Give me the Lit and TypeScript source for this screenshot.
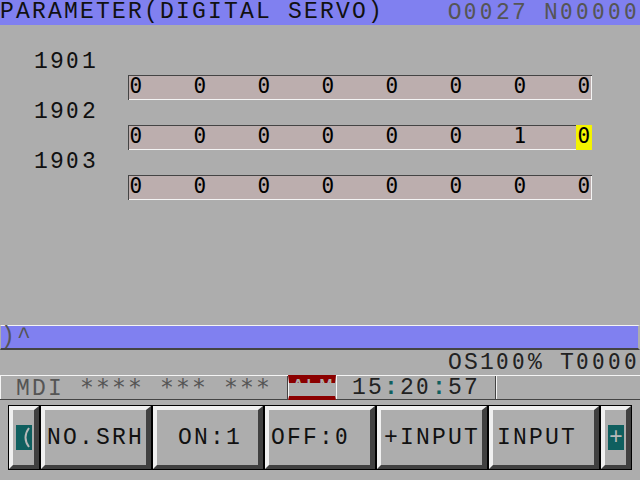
import { LitElement, html, css } from "lit";
import { customElement } from "lit/decorators.js";

const ROWS = [
  { no: "1901", bits: "00000000", cursor: -1 },
  { no: "1902", bits: "00000010", cursor: 7 },
  { no: "1903", bits: "00000000", cursor: -1 },
];

/** Sets every zero in the family whose zero carries a slash. */
const slashed = (s: string) =>
  [...s].map((c) => (c === "0" ? html`<span class="z">0</span>` : c));

const KEYS = [
  { label: html`NO. SRH`, cls: "srh" },
  { label: html`ON:1`, cls: "center" },
  { label: html`OFF:${slashed("0")}`, cls: "" },
  { label: html`+INPUT`, cls: "plus" },
  { label: html`INPUT`, cls: "inp" },
];

@customElement("app-root")
export class AppRoot extends LitElement {
  static styles = css`
    :host {
      display: flex;
      flex-direction: column;
      width: 640px;
      height: 480px;
      overflow: hidden;
      background: #adadad;
      font-family: "Liberation Mono", monospace;
      font-size: 23px;
      line-height: 24px;
      color: #111;
    }
    .t {
      letter-spacing: 2.2px;
      white-space: pre;
    }
    .z {
      font-family: "DejaVu Sans Mono", monospace;
      font-size: 21px;
      letter-spacing: 3.36px;
      font-weight: 400;
    }
    .title {
      display: flex;
      justify-content: space-between;
      height: 25px;
      flex: none;
      background: #8080f0;
    }
    .title .right {
      color: #555;
    }
    .params {
      flex: none;
      height: 300px;
      display: flex;
      flex-direction: column;
      padding-top: 25px;
      box-sizing: border-box;
    }
    .param {
      height: 50px;
      display: flex;
      flex-direction: column;
    }
    .no {
      height: 25px;
      line-height: 22px;
      padding-left: 34px;
    }
    .bar {
      display: flex;
      width: 464px;
      height: 25px;
      margin-left: 128px;
      justify-content: space-between;
      background: #bcaeae;
      box-shadow: inset 1px 1px 0 #444, inset -1px -1px 0 #f4f4f4;
    }
    .bit {
      width: 16px;
      height: 25px;
      line-height: 23px;
      padding-left: 1.5px;
      box-sizing: border-box;
      color: #000;
      font-family: "DejaVu Sans Mono", monospace;
      font-size: 21px;
      display: block;
    }
    .bit.on {
      background: #f4f400;
    }
    .cmd {
      flex: none;
      height: 25px;
      box-sizing: border-box;
      background: #8080f0;
      border-top: 1px solid #f4f4f4;
      border-bottom: 2px solid #444;
      border-left: 1px solid #adadad;
      border-right: 2px solid #adadad;
      color: #555;
      line-height: 22px;
    }
    .status {
      flex: none;
      height: 25px;
      text-align: right;
      color: #222;
    }
    .mode {
      flex: none;
      height: 25px;
      box-sizing: border-box;
      display: flex;
      border-top: 1px solid #f4f4f4;
      border-bottom: 1px solid #444;
    }
    .seg {
      box-sizing: border-box;
      height: 23px;
      line-height: 23px;
    }
    .s1 {
      width: 288px;
      padding-left: 15px;
      color: #555;
      border-right: 1px solid #444;
      border-left: 1px solid #f4f4f4;
    }
    .stars {
      font-family: "DejaVu Sans Mono", monospace;
      letter-spacing: 2.15px;
    }
    .alm {
      width: 48px;
      height: 25px;
      margin: -1px 0;
      box-sizing: border-box;
      background: #adadad;
      border-top: 8px solid #8b0000;
      border-bottom: 4px solid #8b0000;
      border-left: 1px solid #f4f4f4;
      border-right: 1px solid #adadad;
      position: relative;
    }
    .almt {
      position: absolute;
      inset: -5px 0 auto 0;
      height: 5px;
      overflow: hidden;
      text-align: center;
      color: #adadad;
      line-height: 22px;
    }
    .s3 {
      width: 160px;
      padding-left: 15px;
      border-left: 1px solid #f4f4f4;
      border-right: 1px solid #444;
      color: #222;
    }
    .s3 b {
      color: #0f5f5f;
    }
    .s4 {
      flex: 1;
      border-left: 1px solid #f4f4f4;
    }
    .keys {
      flex: none;
      margin: 5px 8px 0;
      display: flex;
      height: 65px;
    }
    .key {
      box-sizing: border-box;
      height: 65px;
      border: 1px solid #000;
      display: flex;
    }
    .bev {
      box-sizing: border-box;
      flex: 1;
      display: flex;
      align-items: center;
      border-style: solid;
      border-width: 4px 5px 4px 4px;
      border-color: #f0f0f0 #404040 #404040 #f0f0f0;
      background: #adadad;
    }
    .wide {
      width: 112px;
    }
    .nar {
      width: 32px;
    }
    .lbl {
      display: block;
      width: 100%;
      padding-left: 2px;
      box-sizing: border-box;
    }
    .srh {
      word-spacing: -15px;
    }
    .center {
      padding-left: 21px;
    }
    .plus {
      padding-left: 3px;
    }
    .inp {
      padding-left: 4px;
    }
    .arrow {
      display: flex;
      align-items: center;
      justify-content: center;
      width: 16px;
      height: 25px;
      margin-left: 3px;
      background: #0f5f5f;
      color: #b8b8b8;
    }
  `;

  render() {
    return html`
      <div class="title">
        <span class="t">PARAMETER(DIGITAL SERVO)</span>
        <span class="t right">O${slashed("0027")} N${slashed("00000")}</span>
      </div>
      <div class="params">
        ${ROWS.map(
          (r) => html`<div class="param">
            <div class="no t">${slashed(r.no)}</div>
            <div class="bar">
              ${[...r.bits].map(
                (b, i) => html`<span class="bit ${i === r.cursor ? "on" : ""}">${b}</span>`
              )}
            </div>
          </div>`
        )}
      </div>
      <div class="cmd t">)^</div>
      <div class="status t">OS1${slashed("00")}% T${slashed("0000")}</div>
      <div class="mode">
        <div class="seg s1 t">MDI <span class="stars">**** *** ***</span></div>
        <div class="alm"><div class="almt">ALM</div></div>
        <div class="seg s3 t">15<b>:</b>2${slashed("0")}<b>:</b>57</div>
        <div class="seg s4"></div>
      </div>
      <div class="keys">
        <div class="key nar">
          <div class="bev">
            <span class="arrow">
              <svg width="16" height="25" viewBox="0 0 16 25">
                <path d="M13 3 C10 7 9.5 10 9.5 12.5 C9.5 15 10 18 13 22" fill="none" stroke="#b8b8b8" stroke-width="2" />
              </svg>
            </span>
          </div>
        </div>
        ${KEYS.map(
          (k) => html`<div class="key wide">
            <div class="bev"><span class="lbl t ${k.cls}">${k.label}</span></div>
          </div>`
        )}
        <div class="key nar"><div class="bev"><span class="arrow">+</span></div></div>
      </div>
    `;
  }
}
